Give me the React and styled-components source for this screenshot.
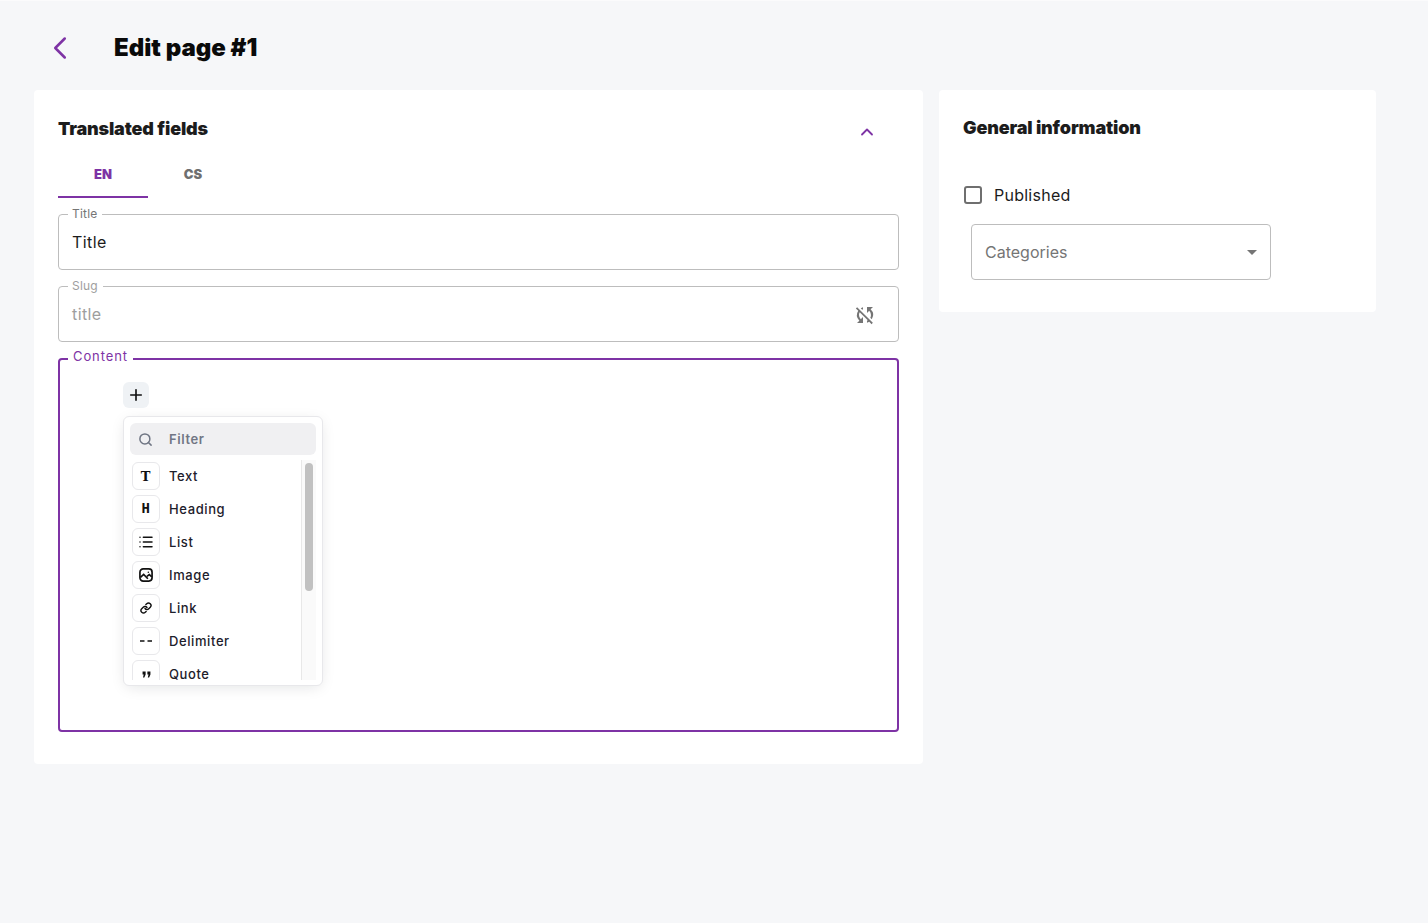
import React from "react";
import styled, { createGlobalStyle } from "styled-components";
import { ChevronLeft, ChevronUp, Plus, Search, List, Link as LinkIcon } from "lucide-react";
import { MdSyncDisabled } from "react-icons/md";

const GlobalStyle = createGlobalStyle`
  html, body {
    margin: 0;
    padding: 0;
    background: #f6f7f9;
    font-family: Inter, "Open Sans", "Liberation Sans", sans-serif;
  }
  * { box-sizing: border-box; }
`;

const Page = styled.div`
  width: 1428px;
  height: 923px;
  padding: 0 52px 0 34px;
  border-top: 1px solid #fbfbfc;
  overflow: hidden;
`;

const Header = styled.header`
  display: flex;
  align-items: center;
  height: 89px;
  padding: 4px 0 0 7px;
`;

const BackButton = styled.div`
  display: flex;
  width: 73px;
  margin-top: 1px;
  color: #7e33a5;
`;

const PageTitle = styled.h1`
  margin: 0;
  font-size: 24px;
  font-weight: 900;
  letter-spacing: 0;
  color: #0a0a0a;
`;

const Columns = styled.div`
  display: grid;
  grid-template-columns: 889px 437px;
  gap: 16px;
  align-items: start;
`;

const Card = styled.section`
  background: #fff;
  border-radius: 4px;
  padding: ${(p) => p.$padding};
  height: ${(p) => p.$height}px;
`;

const CardHead = styled.div`
  display: flex;
  justify-content: space-between;
  align-items: center;
  height: 28px;
  color: #7e33a5;
`;

const CardTitle = styled.h2`
  margin: 0;
  font-size: 18px;
  font-weight: 900;
  letter-spacing: -0.15px;
  color: #1c1c1c;
`;

const Collapse = styled.div`
  display: flex;
  margin: 7px 22px 0 0;
`;

const Tabs = styled.div`
  display: flex;
  height: 42px;
  margin: 14px 0 9px;
`;

const Tab = styled.div`
  width: 90px;
  display: flex;
  align-items: center;
  justify-content: center;
  padding-bottom: 4px;
  font-size: 13px;
  font-weight: 900;
  color: ${(p) => (p.$active ? "#7e33a5" : "#6f6f6f")};
  border-bottom: 2px solid ${(p) => (p.$active ? "#7e33a5" : "transparent")};
`;

const Field = styled.fieldset`
  position: relative;
  display: flex;
  align-items: center;
  margin: 0 0 9px;
  padding: 0 14px;
  height: 63px;
  min-width: 0;
  border: 1px solid #bdbdbd;
  border-radius: 4px;
`;

const Legend = styled.legend`
  padding: 0 5px 0 4px;
  margin-left: -5px;
  font-size: 12px;
  line-height: 14px;
  height: 14px;
  letter-spacing: 0.2px;
  color: ${(p) => p.$color};
`;

const FieldText = styled.span`
  margin: -6px 0 0 -1px;
  font-size: 16px;
  color: ${(p) => p.$color};
  letter-spacing: 0.4px;
`;

const SlugIcon = styled.div`
  position: absolute;
  right: 21px;
  top: 10px;
  display: flex;
  color: #757575;
`;

const ContentField = styled.fieldset`
  position: relative;
  margin: 10px 0 0;
  padding: 0;
  height: 380px;
  min-width: 0;
  border: 2px solid #7e33a5;
  border-radius: 4px;
`;

const ContentLegend = styled.legend`
  margin-left: 8px;
  padding: 0 5px;
  font-size: 13px;
  line-height: 8px;
  height: 14px;
  letter-spacing: 0.9px;
  color: #7e33a5;
`;

const AddBlock = styled.div`
  position: absolute;
  left: 63px;
  top: 16px;
  width: 26px;
  height: 26px;
  display: flex;
  align-items: center;
  justify-content: center;
  background: #eff2f5;
  border-radius: 6px;
  color: #111;
`;

const Popover = styled.div`
  position: absolute;
  left: 63px;
  top: 50px;
  width: 200px;
  height: 270px;
  padding: 6px;
  background: #fff;
  border: 1px solid #e8e8eb;
  border-radius: 6px;
  box-shadow: 0 3px 15px -3px rgba(13, 20, 33, 0.13);
  overflow: hidden;
`;

const FilterBox = styled.div`
  display: flex;
  align-items: center;
  gap: 16px;
  height: 32px;
  padding-left: 8px;
  background: #f0f0f2;
  border-radius: 6px;
  color: #707684;
  font-size: 13px;
  font-weight: 600;
  letter-spacing: 0.6px;
`;

const MenuBody = styled.div`
  display: flex;
  height: 220px;
  margin-top: 5px;
  overflow: hidden;
`;

const MenuList = styled.div`
  flex: 1;
  display: flex;
  flex-direction: column;
  gap: 5px;
  padding: 2px 0 0 2px;
`;

const MenuItem = styled.div`
  display: flex;
  align-items: center;
  gap: 9px;
  flex: none;
  height: 28px;
  font-size: 13px;
  font-weight: 500;
  letter-spacing: 0.6px;
  color: #1d202b;
`;

const ItemIcon = styled.div`
  width: 28px;
  height: 28px;
  display: flex;
  align-items: center;
  justify-content: center;
  flex: none;
  border: 1px solid #e8e8eb;
  border-radius: 6px;
  background: #fff;
  color: #111;
  font-family: "DejaVu Serif", serif;
  font-size: 13px;
  font-weight: 700;
  line-height: 1;
`;

const MonoLetter = styled.span`
  font-family: "Liberation Mono", monospace;
  font-size: 14px;
  font-weight: 700;
`;

const ScrollTrack = styled.div`
  width: 15px;
  flex: none;
  padding: 3px 3px 0;
  background: #fafafa;
  border-left: 1px solid #e8e8e8;
`;

const ScrollThumb = styled.div`
  height: 128px;
  background: #c1c1c1;
  border-radius: 4px;
`;

const CheckRow = styled.label`
  display: flex;
  align-items: center;
  gap: 12px;
  margin: 42px 0 0 1px;
  height: 24px;
  font-size: 16px;
  letter-spacing: 0.25px;
  color: #1c1c1c;
`;

const CheckBox = styled.span`
  width: 18px;
  height: 18px;
  border: 2px solid #6f6f6f;
  border-radius: 3px;
`;

const CheckLabel = styled.span`
  margin-top: -1px;
`;

const SelectBox = styled.div`
  position: relative;
  display: flex;
  align-items: center;
  width: 300px;
  height: 56px;
  margin: 17px 0 0 8px;
  padding: 0 13px;
  font-size: 16px;
  color: #757575;
  border: 1px solid #bdbdbd;
  border-radius: 4px;
`;

const Arrow = styled.span`
  position: absolute;
  right: 13px;
  top: 25px;
  width: 0;
  height: 0;
  border-left: 5px solid transparent;
  border-right: 5px solid transparent;
  border-top: 5px solid #757575;
`;

function ImageIcon() {
  return (
    <svg width="14" height="14" viewBox="0 0 15 15" fill="none" stroke="#111" strokeWidth="1.8">
      <rect x="1" y="1" width="13" height="13" rx="3.5" />
      <path d="M1.5 10 L5 6.8 L9.5 11.5 M8.5 9 L11 7 L13.8 9.5" />
      <circle cx="10" cy="4.6" r="0.8" fill="#111" stroke="none" />
    </svg>
  );
}

function DelimiterIcon() {
  return (
    <svg width="14" height="4" viewBox="0 0 14 4" stroke="#111" strokeWidth="1.7">
      <path d="M1 2 H5.5 M8.5 2 H13" />
    </svg>
  );
}

function QuoteIcon() {
  return (
    <svg width="9" height="7" viewBox="0 0 10 8" fill="#111">
      <path d="M0.5 0.5 H4 V4 L2.5 7.5 H1 L1.8 4 H0.5 Z M6 0.5 H9.5 V4 L8 7.5 H6.5 L7.3 4 H6 Z" />
    </svg>
  );
}

const items = [
  { label: "Text", icon: "T" },
  { label: "Heading", icon: <MonoLetter>H</MonoLetter> },
  { label: "List", icon: <List size={16} strokeWidth={2.2} /> },
  { label: "Image", icon: <ImageIcon /> },
  { label: "Link", icon: <LinkIcon size={12} strokeWidth={2.8} /> },
  { label: "Delimiter", icon: <DelimiterIcon /> },
  { label: "Quote", icon: <QuoteIcon /> },
];

export default function App() {
  return (
    <Page>
      <GlobalStyle />
      <Header>
        <BackButton>
          <ChevronLeft size={38} strokeWidth={1.6} />
        </BackButton>
        <PageTitle>Edit page #1</PageTitle>
      </Header>
      <Columns>
        <Card $padding="24px 24px 0" $height={674}>
          <CardHead>
            <CardTitle>Translated fields</CardTitle>
            <Collapse>
              <ChevronUp size={20} strokeWidth={2.2} />
            </Collapse>
          </CardHead>
          <Tabs>
            <Tab $active>EN</Tab>
            <Tab>CS</Tab>
          </Tabs>
          <Field>
            <Legend $color="#757575">Title</Legend>
            <FieldText $color="#1c1c1c">Title</FieldText>
          </Field>
          <Field>
            <Legend $color="#9e9e9e">Slug</Legend>
            <FieldText $color="#9e9e9e">title</FieldText>
            <SlugIcon>
              <MdSyncDisabled size={24} />
            </SlugIcon>
          </Field>
          <ContentField>
            <ContentLegend>Content</ContentLegend>
            <AddBlock>
              <Plus size={18} strokeWidth={2.2} />
            </AddBlock>
            <Popover>
              <FilterBox>
                <Search size={15} strokeWidth={2.4} />
                Filter
              </FilterBox>
              <MenuBody>
                <MenuList>
                  {items.map((item) => (
                    <MenuItem key={item.label}>
                      <ItemIcon>{item.icon}</ItemIcon>
                      {item.label}
                    </MenuItem>
                  ))}
                </MenuList>
                <ScrollTrack>
                  <ScrollThumb />
                </ScrollTrack>
              </MenuBody>
            </Popover>
          </ContentField>
        </Card>
        <Card $padding="23px 24px 0" $height={222}>
          <CardHead>
            <CardTitle>General information</CardTitle>
          </CardHead>
          <CheckRow>
            <CheckBox />
            <CheckLabel>Published</CheckLabel>
          </CheckRow>
          <SelectBox>
            Categories
            <Arrow />
          </SelectBox>
        </Card>
      </Columns>
    </Page>
  );
}
